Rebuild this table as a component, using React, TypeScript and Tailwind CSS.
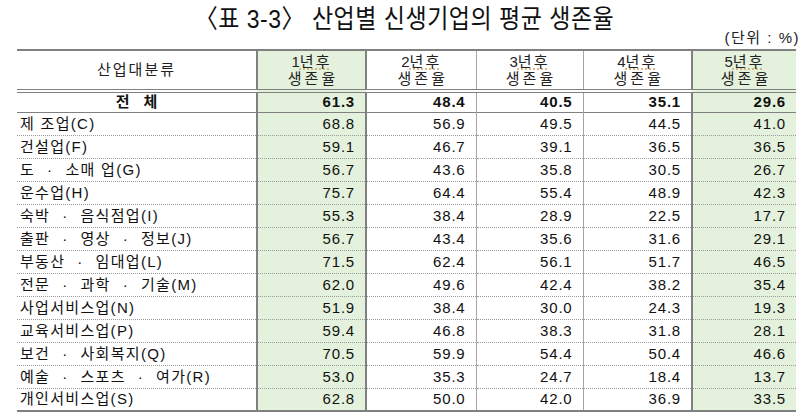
const rows: [string, string, string, string, string, string][] = [
  ['제 조업(C)', '68.8', '56.9', '49.5', '44.5', '41.0'],
  ['건설업(F)', '59.1', '46.7', '39.1', '36.5', '36.5'],
  ['도·소매 업(G)', '56.7', '43.6', '35.8', '30.5', '26.7'],
  ['운수업(H)', '75.7', '64.4', '55.4', '48.9', '42.3'],
  ['숙박·음식점업(I)', '55.3', '38.4', '28.9', '22.5', '17.7'],
  ['출판·영상·정보(J)', '56.7', '43.4', '35.6', '31.6', '29.1'],
  ['부동산·임대업(L)', '71.5', '62.4', '56.1', '51.7', '46.5'],
  ['전문·과학·기술(M)', '62.0', '49.6', '42.4', '38.2', '35.4'],
  ['사업서비스업(N)', '51.9', '38.4', '30.0', '24.3', '19.3'],
  ['교육서비스업(P)', '59.4', '46.8', '38.3', '31.8', '28.1'],
  ['보건·사회복지(Q)', '70.5', '59.9', '54.4', '50.4', '46.6'],
  ['예술·스포츠·여가(R)', '53.0', '35.3', '24.7', '18.4', '13.7'],
  ['개인서비스업(S)', '62.8', '50.0', '42.0', '36.9', '33.5'],
];

const total = ['61.3', '48.4', '40.5', '35.1', '29.6'];

const font = { fontFamily: '"Liberation Sans", "Noto Sans CJK KR", sans-serif' };

// border classes per data column (1..5)
const colBorder = [
  'border-l-2 border-l-[#808080] border-r-2 border-r-[#808080] bg-[#e4f1dc]',
  'border-r border-r-[#a6a6a6]',
  'border-r border-r-[#a6a6a6]',
  'border-r-2 border-r-[#808080]',
  'bg-[#e4f1dc]',
];

function Label({ text }: { text: string }) {
  const parts = text.split('·');
  return (
    <>
      {parts.map((p, i) => (
        <span key={i}>
          {i > 0 && <span className="px-[12px]">·</span>}
          {p}
        </span>
      ))}
    </>
  );
}

function YearHead({ n }: { n: number }) {
  return (
    <div className="leading-[17px] text-[15px] text-[#222]">
      <div>
        {n}
        <span className="underline decoration-dotted decoration-[#c9a46a] underline-offset-2 tracking-[2px]">년후</span>
      </div>
      <div className="tracking-[3px] pl-[3px]">생존율</div>
    </div>
  );
}

export default function App() {
  return (
    <div className="w-[809px] h-[420px] bg-white overflow-hidden" style={font}>
      <h1 className="text-center text-[23px] leading-[28px] pt-[5px] text-[#111] font-normal tracking-[0.5px]">
        <span className="inline-block scale-y-[1.12]">〈표 3-3〉 산업별 신생기업의 평균 생존율</span>
      </h1>
      <div className="text-right pr-[9px] text-[15px] leading-[16px] text-[#222] tracking-[1.5px] -mt-[3px]">(단위 : %)</div>

      <table className="ml-[17px] mt-[3px] border-collapse table-fixed w-[779px] text-[15px] leading-[18px] text-[#111]">
        <colgroup>
          <col className="w-[240px]" />
          <col className="w-[109px]" />
          <col className="w-[110px]" />
          <col className="w-[107px]" />
          <col className="w-[109px]" />
          <col className="w-[104px]" />
        </colgroup>
        <thead>
          <tr className="h-[41px] border-t-2 border-t-[#808080] border-b-[4px] border-double border-b-[#808080]">
            <th className="p-0 font-normal text-[15px] tracking-[2px] text-[#222]">산업대분류</th>
            {[1, 2, 3, 4, 5].map((n, i) => (
              <th key={n} className={`p-0 font-normal text-center align-middle ${colBorder[i]}`}>
                <YearHead n={n} />
              </th>
            ))}
          </tr>
        </thead>
        <tbody>
          <tr className="h-[21px] border-b border-b-[#808080]">
            <td className="p-0 text-center font-bold tracking-[14px] pl-[14px]">전체</td>
            {total.map((v, i) => (
              <td key={i} className={`p-0 text-right pr-[10px] font-bold tracking-[0.8px] ${colBorder[i]}`}>
                {v}
              </td>
            ))}
          </tr>
          {rows.map((r, ri) => (
            <tr
              key={r[0]}
              className={`h-[23px] ${ri === rows.length - 1 ? 'border-b-2 border-b-[#808080]' : 'border-b border-dotted border-b-[#9a9a9a]'}`}
            >
              <td className="p-0 pl-[3px] tracking-[1.3px] text-[#111] whitespace-nowrap">
                <Label text={r[0]} />
              </td>
              {r.slice(1).map((v, i) => (
                <td key={i} className={`p-0 text-right pr-[10px] tracking-[0.8px] ${colBorder[i]}`}>
                  {v}
                </td>
              ))}
            </tr>
          ))}
        </tbody>
      </table>
    </div>
  );
}
